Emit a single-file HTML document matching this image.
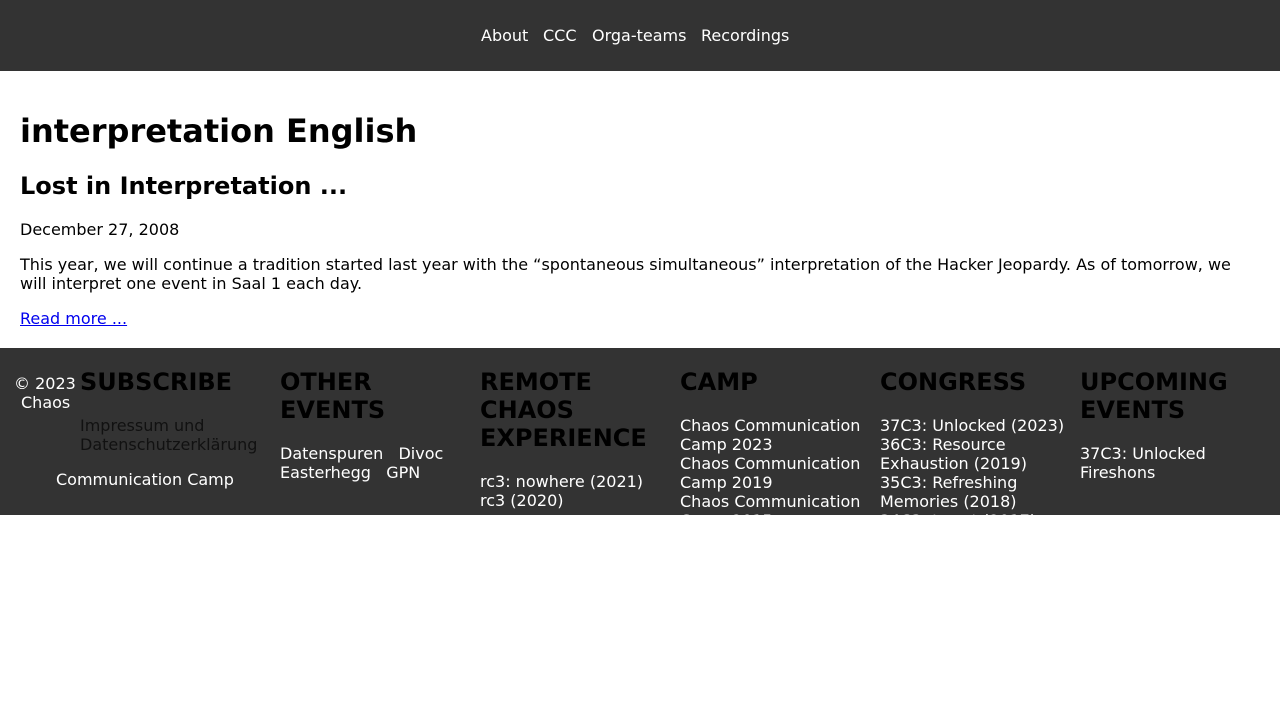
<!DOCTYPE html><html><head><meta charset="utf-8"><style>
body{margin:0;font-family:"DejaVu Sans","Liberation Sans",sans-serif;background:#fff;color:#000;width:1280px;height:720px;overflow:hidden;position:relative}
.nav{position:absolute;left:0;top:0;width:1280px;height:71px;background:#333}
.nav span{position:absolute;top:26px;color:#fff;font-size:16px;line-height:19px}
.a{position:absolute;white-space:nowrap;line-height:19px;font-size:16px}
.foot{position:absolute;left:0;top:348px;width:1280px;height:167px;background:#333;overflow:hidden}
.foot .a{color:#fff}
.foot h3{position:absolute;margin:0;font-size:24px;line-height:28px;font-weight:bold;color:#000}
</style></head><body>
<div class="nav"><span style="left:481px">About</span><span style="left:543px">CCC</span><span style="left:592px">Orga-teams</span><span style="left:701px">Recordings</span></div>
<div class="a" style="left:20px;top:112px;font-size:32px;line-height:38px;font-weight:bold">interpretation English</div>
<div class="a" style="left:20px;top:172px;font-size:24px;line-height:29px;font-weight:bold">Lost in Interpretation ...</div>
<div class="a" style="left:20px;top:220px">December 27, 2008</div>
<div class="a" style="left:20px;top:255px;white-space:normal;width:1230px">This year, we will continue a tradition started last year with the “spontaneous simultaneous” interpretation of the Hacker Jeopardy. As of tomorrow, we will interpret one event in Saal 1 each day.</div>
<div class="a" style="left:20px;top:309px;color:#00e;text-decoration:underline">Read more ...</div>
<div class="foot">
<div class="a" style="left:14px;top:26px">© 2023</div>
<div class="a" style="left:21px;top:45px">Chaos</div>
<div class="a" style="left:56px;top:122px">Communication Camp</div>
<h3 style="left:80px;top:20px">SUBSCRIBE</h3>
<div class="a" style="left:80px;top:68px;color:#111">Impressum und<br>Datenschutzerklärung</div>
<h3 style="left:280px;top:20px">OTHER<br>EVENTS</h3>
<div class="a" style="left:280px;top:96px">Datenspuren &nbsp; Divoc<br>Easterhegg &nbsp; GPN</div>
<h3 style="left:480px;top:20px">REMOTE<br>CHAOS<br>EXPERIENCE</h3>
<div class="a" style="left:480px;top:124px">rc3: nowhere (2021)<br>rc3 (2020)</div>
<h3 style="left:680px;top:20px">CAMP</h3>
<div class="a" style="left:680px;top:68px">Chaos Communication<br>Camp 2023<br>Chaos Communication<br>Camp 2019<br>Chaos Communication<br>Camp 2015</div>
<h3 style="left:880px;top:20px">CONGRESS</h3>
<div class="a" style="left:880px;top:68px">37C3: Unlocked (2023)<br>36C3: Resource<br>Exhaustion (2019)<br>35C3: Refreshing<br>Memories (2018)<br>34C3: tuwat (2017)</div>
<h3 style="left:1080px;top:20px">UPCOMING<br>EVENTS</h3>
<div class="a" style="left:1080px;top:96px">37C3: Unlocked<br>Fireshons</div>
</div>
</body></html>
